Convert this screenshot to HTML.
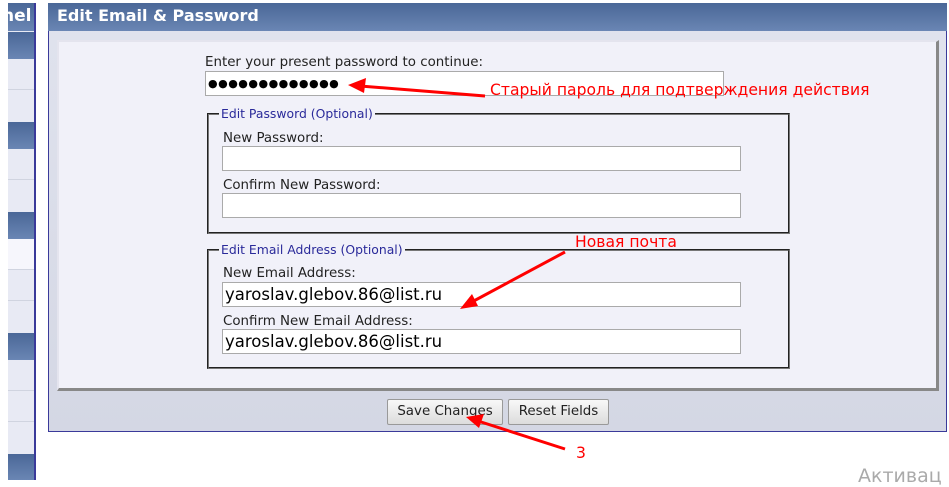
<!DOCTYPE html>
<html><head><meta charset="utf-8"><style>
*{box-sizing:border-box;margin:0;padding:0}
body{width:949px;height:480px;background:#fff;position:relative;overflow:hidden;font-family:Verdana,"DejaVu Sans",sans-serif;font-size:13.4px;color:#222}
.a{position:absolute}
.dk{background:linear-gradient(#4a6797,#6a86b4)}
.lt{background:#e8eaf4;border-bottom:1px solid #d0d4e0}
.inp{position:absolute;background:#fff;border:1px solid #aaa;height:25px;font-size:16.5px;padding:2px 0 0 2px;color:#000}
fieldset{position:absolute;border:2px solid #777;border-style:groove}
legend{color:#2a2a9a;font-size:12.4px;padding:0 2px;margin-left:10px}
.btn{position:absolute;top:399px;height:26px;background:linear-gradient(#f8f8f8,#dcdcdc);border:1px solid #999;border-radius:2px;font-size:13.4px;text-align:center;line-height:24px}
.red{color:#f00;font-size:15.6px;position:absolute}
</style></head><body>
<div class="a" style="left:8px;top:3px;width:26px;height:477px;background:#e8eaf4"></div>
<div class="a dk" style="left:8px;top:3px;width:26px;height:28px;color:#fff;font-weight:bold;font-size:17px;line-height:26px;overflow:hidden"><span style="margin-left:-6px">nel</span></div>
<div class="a dk" style="left:8px;top:32px;width:26px;height:27px"></div>
<div class="a lt" style="left:8px;top:59px;width:26px;height:31px"></div>
<div class="a dk" style="left:8px;top:122px;width:26px;height:27px"></div>
<div class="a lt" style="left:8px;top:149px;width:26px;height:31px"></div>
<div class="a dk" style="left:8px;top:212px;width:26px;height:27px"></div>
<div class="a" style="left:8px;top:239px;width:26px;height:31px;background:#f6f6fc;border-bottom:1px solid #d0d4e0"></div>
<div class="a lt" style="left:8px;top:270px;width:26px;height:31px"></div>
<div class="a dk" style="left:8px;top:333px;width:26px;height:27px"></div>
<div class="a lt" style="left:8px;top:360px;width:26px;height:31px"></div>
<div class="a lt" style="left:8px;top:391px;width:26px;height:31px"></div>
<div class="a dk" style="left:8px;top:454px;width:26px;height:26px"></div>
<div class="a" style="left:34px;top:3px;width:2px;height:477px;background:#3a3a9a"></div>

<div class="a" style="left:48px;top:3px;width:899px;height:429px;border:1px solid #3a3a9a;border-top:none;background:linear-gradient(#e0e3ee,#d4d7e4)"></div>
<div class="a dk" style="left:48px;top:3px;width:899px;height:28px;color:#fff;font-weight:bold;font-size:16px;line-height:26px;padding-left:9px">Edit Email &amp; Password</div>
<div class="a" style="left:57px;top:40px;width:882px;height:351px;background:#f1f1f9;border-right:3px solid #888;border-bottom:3px solid #888;border-top:2px solid #e4e4ee;border-left:2px solid #e4e4ee"></div>

<div class="a" style="left:205px;top:55px">Enter your present password to continue:</div>
<div class="inp" style="left:205px;top:71px;width:519px;font-size:11px;letter-spacing:0.5px;padding-top:5px">●●●●●●●●●●●●●</div>

<fieldset style="left:207px;top:106px;width:583px;height:128px"><legend>Edit Password (Optional)</legend></fieldset>
<div class="a" style="left:223px;top:131px">New Password:</div>
<div class="inp" style="left:222px;top:146px;width:519px"></div>
<div class="a" style="left:223px;top:178px">Confirm New Password:</div>
<div class="inp" style="left:222px;top:193px;width:519px"></div>

<fieldset style="left:207px;top:242px;width:583px;height:127px"><legend>Edit Email Address (Optional)</legend></fieldset>
<div class="a" style="left:223px;top:266px">New Email Address:</div>
<div class="inp" style="left:222px;top:282px;width:519px">yaroslav.glebov.86@list.ru</div>
<div class="a" style="left:223px;top:314px">Confirm New Email Address:</div>
<div class="inp" style="left:222px;top:329px;width:519px">yaroslav.glebov.86@list.ru</div>

<div class="btn" style="left:387px;width:116px">Save Changes</div>
<div class="btn" style="left:508px;width:101px">Reset Fields</div>

<div class="red" style="left:490px;top:81px">Старый пароль для подтверждения действия</div>
<div class="red" style="left:575px;top:233px">Новая почта</div>
<div class="red" style="left:576px;top:444px">3</div>
<div class="a" style="left:858px;top:465px;color:#aaa;font-size:19px">Активац</div>

<svg class="a" style="left:0;top:0" width="949" height="480">
<g stroke="#f00" stroke-width="3" fill="#f00">
<line x1="485" y1="96" x2="360" y2="86"/><polygon points="348,85 366,78 364,93" stroke="none"/>
<line x1="565" y1="252" x2="470" y2="303"/><polygon points="460,309 472,294 478,306" stroke="none"/>
<line x1="565" y1="449" x2="478" y2="421"/><polygon points="466,417 484,414 479,428" stroke="none"/>
</g></svg>
</body></html>
